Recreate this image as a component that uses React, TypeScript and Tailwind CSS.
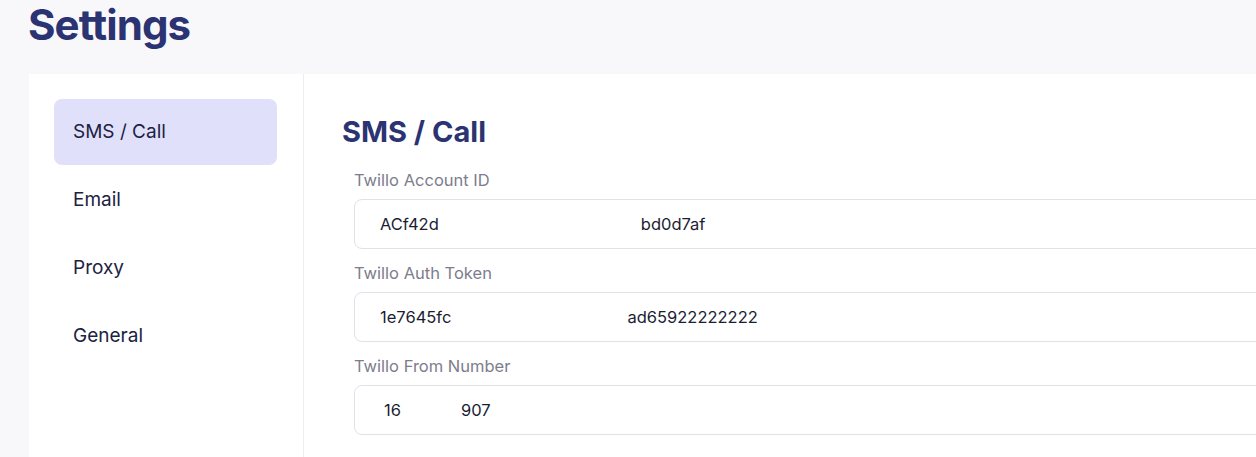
const NAV = ["SMS / Call", "Email", "Proxy", "General"];

function Field({ label, left, gap, right, indent = "" }: { label: string; left: string; gap: number; right: string; indent?: string }) {
  return (
    <div className="flex flex-col">
      <label className="text-[16.5px] leading-6 text-[#7d7d8c] mb-[7px]">{label}</label>
      <div className="h-[50px] rounded-lg border border-[#e1e1ea] bg-white flex items-center pl-[25px] text-[16.5px] text-[#1b1d33]">
        <span className={indent}>{left}</span>
        <span className="inline-block" style={{ width: gap }} />
        <span>{right}</span>
      </div>
    </div>
  );
}

export default function App() {
  return (
    <div
      className="h-screen w-full overflow-hidden bg-[#f8f8fb]"
      style={{ fontFamily: "Inter, 'Noto Sans', sans-serif" }}
    >
      <h1 className="pl-[28px] pt-[1px] h-[74px] text-[42px] leading-[48px] font-bold text-[#2b3372] tracking-[-0.9px]">
        Settings
      </h1>

      <div className="ml-[29px] w-[1400px] h-[400px] bg-white flex">
        {/* Sidebar */}
        <div className="w-[275px] shrink-0 border-r border-[#ececf2] pt-[25px] pl-[25px] pr-[26px] flex flex-col gap-[2px]">
          {NAV.map((n, i) => (
            <div
              key={n}
              className={`h-[66px] rounded-lg flex items-center pl-[19px] text-[19px] text-[#1d2142] ${
                i === 0 ? "bg-[#e0e0fa]" : ""
              }`}
            >
              {n}
            </div>
          ))}
        </div>

        {/* Content */}
        <div className="flex-1 pt-[40px] pl-[38px]">
          <h2 className="text-[29px] leading-9 font-bold text-[#2b3372] mb-[18px]">SMS / Call</h2>
          <div className="pl-3 flex flex-col gap-3">
            <Field label="Twillo Account ID" left="ACf42d" gap={202} right="bd0d7af" />
            <Field label="Twillo Auth Token" left="1e7645fc" gap={176} right="ad65922222222" />
            <Field label="Twillo From Number" left="16" gap={60} right="907" indent="pl-[4px]" />
          </div>
        </div>
      </div>
    </div>
  );
}
